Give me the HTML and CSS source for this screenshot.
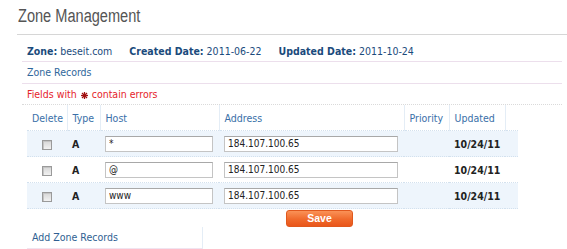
FILE: index.html
```html
<!DOCTYPE html>
<html>
<head>
<meta charset="utf-8">
<link rel="stylesheet" href="styles.css">
</head>
<body>
<div class="page">
  <h1 class="title"><span class="title-text">Zone Management</span></h1>
  <div class="section">
    <div class="info">
      <span class="info-item"><b>Zone:</b> beseit.com</span>
      <span class="info-item"><b>Created Date:</b> 2011-06-22</span>
      <span class="info-item"><b>Updated Date:</b> 2011-10-24</span>
    </div>
    <div class="sub">Zone Records</div>
    <div class="err">Fields with <svg class="star" width="7" height="7" viewBox="0 0 7 7"><g stroke="#a01010" stroke-width="1.3"><line x1="3.5" y1="0" x2="3.5" y2="7"/><line x1="0" y1="3.5" x2="7" y2="3.5"/><line x1="1" y1="1" x2="6" y2="6"/><line x1="6" y1="1" x2="1" y2="6"/></g></svg> contain errors</div>
    <table class="records">
      <colgroup>
        <col class="c-del"><col class="c-type"><col class="c-host"><col class="c-addr"><col class="c-pri"><col class="c-upd"><col class="c-end">
      </colgroup>
      <thead>
        <tr><th>Delete</th><th>Type</th><th>Host</th><th>Address</th><th>Priority</th><th>Updated</th><th></th></tr>
      </thead>
      <tbody>
        <tr class="alt">
          <td class="del"><span class="chk"></span></td>
          <td class="type">A</td>
          <td><input class="inp host" type="text" value="*"></td>
          <td><input class="inp addr" type="text" value="184.107.100.65"></td>
          <td></td>
          <td class="upd">10/24/11</td>
          <td></td>
        </tr>
        <tr>
          <td class="del"><span class="chk"></span></td>
          <td class="type">A</td>
          <td><input class="inp host" type="text" value="@"></td>
          <td><input class="inp addr" type="text" value="184.107.100.65"></td>
          <td></td>
          <td class="upd">10/24/11</td>
          <td></td>
        </tr>
        <tr class="alt">
          <td class="del"><span class="chk"></span></td>
          <td class="type">A</td>
          <td><input class="inp host" type="text" value="www"></td>
          <td><input class="inp addr" type="text" value="184.107.100.65"></td>
          <td></td>
          <td class="upd">10/24/11</td>
          <td></td>
        </tr>
      </tbody>
    </table>
    <div class="actions"><button class="save" type="button">Save</button></div>
    <div class="add-tab">Add Zone Records</div>
  </div>
</div>
</body>
</html>
```
FILE: styles.css
```css
html, body {
  margin: 0;
  padding: 0;
  background: #fff;
}
body {
  font-family: "DejaVu Sans Condensed", "DejaVu Sans", sans-serif;
  font-size: 10.5px;
  color: #222;
}
.page {
  padding-left: 17px;
}
.title {
  margin: 6px 0 0 0;
  padding: 0 0 8px 1px;
  font-family: "Liberation Sans", sans-serif;
  font-weight: normal;
  font-size: 18px;
  line-height: 20px;
  color: #555;
  border-bottom: 1px solid #d6d6d6;
}
.title-text {
  display: inline-block;
  transform: scaleX(0.81);
  transform-origin: left center;
}
.section {
  margin-left: 5px;
  margin-right: 5px;
}
.info {
  padding: 9px 0 3px 5px;
  line-height: 14px;
  color: #1b4b7c;
  border-bottom: 1px solid #ecdfec;
  display: flex;
  gap: 17px;
}
.info b {
  font-weight: bold;
}
.sub {
  padding: 3px 0 4px 5px;
  line-height: 14px;
  color: #2f679b;
  border-bottom: 1px solid #ecdfec;
}
.err {
  padding: 3px 0 3px 5px;
  line-height: 14px;
  color: #e5232b;
  border-bottom: 1px dotted #dadada;
}
.star {
  vertical-align: -1px;
  margin: 0 1px;
}
.records {
  margin-left: 5px;
  border-collapse: collapse;
  table-layout: fixed;
  width: 491px;
}
.c-del { width: 40px; }
.c-type { width: 33px; }
.c-host { width: 119px; }
.c-addr { width: 185px; }
.c-pri { width: 45px; }
.c-upd { width: 56px; }
.c-end { width: 13px; }
.records th {
  height: 25px;
  padding: 0 5px;
  text-align: left;
  font-weight: normal;
  color: #3a70a8;
  border-right: 1px solid #e4edf6;
  vertical-align: middle;
  white-space: nowrap;
}
.records th:last-child {
  border-right: none;
}
.records td {
  height: 25px;
  padding: 0 5px;
  vertical-align: middle;
  white-space: nowrap;
}
.records tr.alt td {
  background: #eef5fc;
  border-top: 1px dotted #d3e1ee;
  border-bottom: 1px dotted #d3e1ee;
}
.records td.del {
  text-align: center;
}
.chk {
  display: inline-block;
  width: 8px;
  height: 8px;
  border: 1px solid #9a9a9a;
  background: linear-gradient(#d6d6d6, #f2f2f2);
  vertical-align: middle;
  box-shadow: inset 1px 1px 0 #c4c4c4;
}
.type, .upd {
  font-weight: bold;
  color: #222;
}
.type {
  padding-left: 6px;
}
.inp {
  box-sizing: border-box;
  height: 16px;
  margin: 0;
  padding: 0 3px;
  border: 1px solid #c4c4c4;
  border-top-color: #a8a8a8;
  background: #fff;
  font-family: "DejaVu Sans Condensed", "DejaVu Sans", sans-serif;
  font-size: 10px;
  color: #222;
  display: block;
}
.inp.host {
  width: 108px;
}
.inp.addr {
  width: 174px;
}
.actions {
  padding: 1px 0 0 264px;
  line-height: 0;
}
.save {
  width: 67px;
  height: 17px;
  margin: 0;
  padding: 0;
  border: 1px solid #e0581d;
  border-radius: 3px;
  background: linear-gradient(#fa9257, #f06a2c 55%, #e9561b);
  color: #fff;
  font-family: "Liberation Sans", sans-serif;
  font-weight: bold;
  font-size: 10.5px;
  line-height: 15px;
}
.add-tab {
  width: 170px;
  margin-left: 5px;
  padding: 3px 0 4px 5px;
  line-height: 14px;
  color: #2f5f92;
  border-right: 1px solid #e4edf6;
  border-bottom: 1px solid #f0e4f0;
}
```
